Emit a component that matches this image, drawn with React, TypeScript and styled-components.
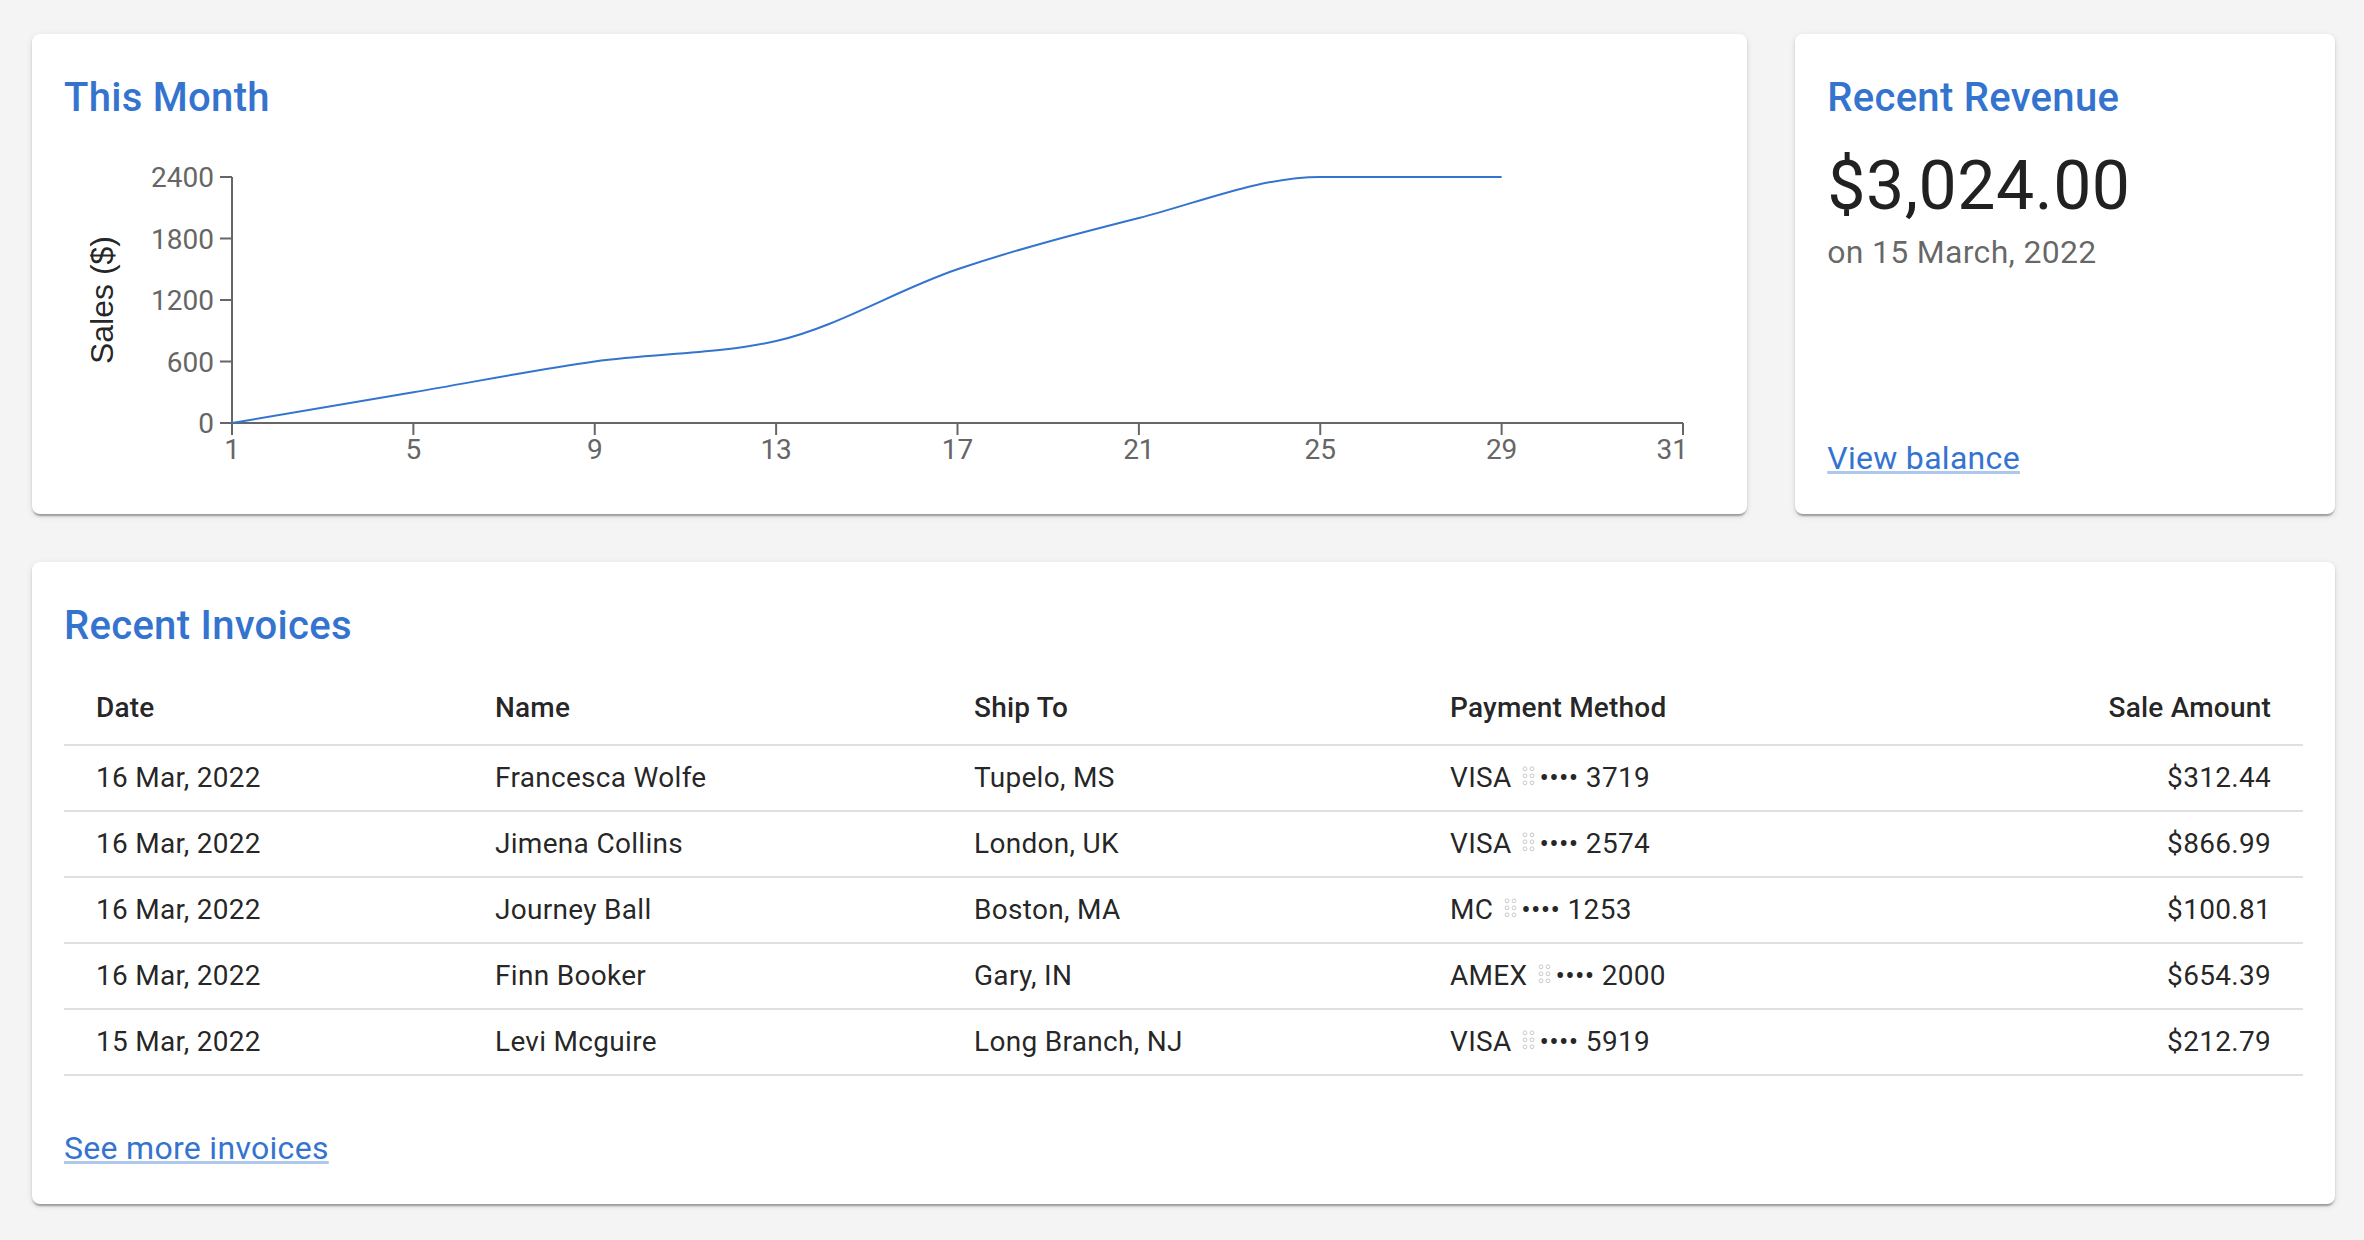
import React from "react";
import styled, { createGlobalStyle } from "styled-components";

const PRIMARY = "#3474cf";

const GlobalStyle = createGlobalStyle`
  html, body {
    margin: 0;
    padding: 0;
    background: #f4f4f4;
  }
  body {
    font-family: Roboto, "DejaVu Sans", "Liberation Sans", sans-serif;
    color: rgba(0, 0, 0, 0.87);
    -webkit-font-smoothing: antialiased;
  }
`;

const Page = styled.main`
  box-sizing: border-box;
  width: 100%;
  padding: 34px 29px 32px 32px;
  display: flex;
  flex-direction: column;
  gap: 48px;
`;

const TopRow = styled.div`
  display: grid;
  grid-template-columns: calc(75% - 12px) calc(25% - 36px);
  gap: 48px;
`;

const Paper = styled.section<{ $height?: number }>`
  box-sizing: border-box;
  background: #fff;
  border-radius: 8px;
  box-shadow: 0px 4px 2px -2px rgba(0, 0, 0, 0.2), 0px 2px 2px 0px rgba(0, 0, 0, 0.14),
    0px 2px 6px 0px rgba(0, 0, 0, 0.12);
  padding: 32px;
  display: flex;
  flex-direction: column;
  height: ${(p) => (p.$height ? `${p.$height}px` : "auto")};
`;

const Title = styled.h2`
  margin: 0 0 14px;
  font-family: Roboto, sans-serif;
  font-weight: 500;
  font-size: 40px;
  line-height: 64px;
  letter-spacing: 0.3px;
  color: ${PRIMARY};
`;

const ChartArea = styled.div`
  flex: 1;
  min-height: 0;
`;

const ChartSvg = styled.svg`
  display: block;
  overflow: visible;
`;

const Amount = styled.div`
  font-family: Roboto, sans-serif;
  font-weight: 400;
  font-size: 68px;
  line-height: 84px;
  letter-spacing: 0.5px;
  color: rgba(0, 0, 0, 0.87);
`;

const DateText = styled.p`
  margin: 0;
  flex: 1;
  font-size: 32px;
  line-height: 48px;
  letter-spacing: 0.3px;
  color: rgba(0, 0, 0, 0.6);
`;

const TextLink = styled.a<{ $mt?: number }>`
  align-self: flex-start;
  margin-top: ${(p) => p.$mt ?? 0}px;
  font-size: 32px;
  line-height: 48px;
  letter-spacing: 0.3px;
  color: ${PRIMARY};
  text-decoration: underline;
  text-decoration-color: rgba(52, 116, 207, 0.4);
  cursor: pointer;
`;

const Table = styled.table`
  width: 100%;
  border-collapse: collapse;
  table-layout: fixed;
`;

const HeadCell = styled.th<{ $align?: string }>`
  padding: 12px 32px;
  text-align: ${(p) => p.$align ?? "left"};
  font-size: 28px;
  font-weight: 500;
  line-height: 48px;
  letter-spacing: 0.2px;
  color: rgba(0, 0, 0, 0.87);
  border-bottom: 2px solid #e0e0e0;
`;

const Cell = styled.td<{ $align?: string }>`
  padding: 12px 32px;
  text-align: ${(p) => p.$align ?? "left"};
  font-size: 28px;
  font-weight: 400;
  line-height: 40px;
  letter-spacing: 0.3px;
  color: rgba(0, 0, 0, 0.87);
  border-bottom: 2px solid #e0e0e0;
  white-space: nowrap;
`;

const BrailleGlyph = styled.span`
  position: relative;
`;

const BrailleDots = styled.svg`
  position: absolute;
  left: 3px;
  top: 50%;
  transform: translateY(-60%);
  width: 14px;
  height: 22px;
  pointer-events: none;
`;

/* ---------- Chart ---------- */

const labels = ["1", "5", "9", "13", "17", "21", "25", "29", "31"];
const amounts = [0, 300, 600, 800, 1500, 2000, 2400, 2400];

const W = 1651;
const H = 338;
const PL = 168;
const PR = 1619;
const PT = 33;
const PB = 279;
const step = (PR - PL) / (labels.length - 1);
const yOf = (v: number) => PB - (v / 2400) * (PB - PT);

function monotonePath(pts: [number, number][]) {
  const n = pts.length;
  const sign = (x: number) => (x < 0 ? -1 : 1);
  const m: number[] = new Array(n).fill(0);
  for (let i = 1; i < n - 1; i++) {
    const h0 = pts[i][0] - pts[i - 1][0];
    const h1 = pts[i + 1][0] - pts[i][0];
    const s0 = (pts[i][1] - pts[i - 1][1]) / h0;
    const s1 = (pts[i + 1][1] - pts[i][1]) / h1;
    const p = (s0 * h1 + s1 * h0) / (h0 + h1);
    m[i] = (sign(s0) + sign(s1)) * Math.min(Math.abs(s0), Math.abs(s1), 0.5 * Math.abs(p)) || 0;
  }
  const hA = pts[1][0] - pts[0][0];
  m[0] = (3 * (pts[1][1] - pts[0][1]) / hA - m[1]) / 2;
  const hB = pts[n - 1][0] - pts[n - 2][0];
  m[n - 1] = (3 * (pts[n - 1][1] - pts[n - 2][1]) / hB - m[n - 2]) / 2;
  let d = `M${pts[0][0]},${pts[0][1]}`;
  for (let i = 0; i < n - 1; i++) {
    const [x0, y0] = pts[i];
    const [x1, y1] = pts[i + 1];
    const dx = (x1 - x0) / 3;
    d += `C${x0 + dx},${y0 + dx * m[i]},${x1 - dx},${y1 - dx * m[i + 1]},${x1},${y1}`;
  }
  return d;
}

const SalesChart: React.FC = () => {
  const pts: [number, number][] = amounts.map((v, i) => [PL + i * step, yOf(v)]);
  const yTicks = [0, 600, 1200, 1800, 2400];
  const last = labels.length - 1;
  return (
    <ChartSvg width={W} height={H} viewBox={`0 0 ${W} ${H}`}>
      <g stroke="#666" strokeWidth={2} fill="none">
        <line x1={PL} y1={PT} x2={PL} y2={PB} />
        <line x1={PL} y1={PB} x2={PR} y2={PB} />
        {yTicks.map((t) => (
          <line key={t} x1={PL - 12} y1={yOf(t)} x2={PL} y2={yOf(t)} />
        ))}
        {labels.map((l, i) => (
          <line key={l} x1={PL + i * step} y1={PB} x2={PL + i * step} y2={PB + 12} />
        ))}
      </g>
      <g fill="#666" fontFamily="Roboto, sans-serif" fontSize={28}>
        {yTicks.map((t) => (
          <text key={t} x={PL - 18} y={yOf(t) + 10} textAnchor="end">
            {t}
          </text>
        ))}
        {labels.map((l, i) => (
          <text
            key={l}
            x={i === last ? PR + 5 : PL + i * step}
            y={315}
            textAnchor={i === last ? "end" : "middle"}
          >
            {l}
          </text>
        ))}
      </g>
      <text
        x={49}
        y={(PT + PB) / 2}
        transform={`rotate(-90 49 ${(PT + PB) / 2})`}
        textAnchor="middle"
        fontFamily="'Liberation Sans', Arial, sans-serif"
        fontSize={32}
        fill="rgba(0,0,0,0.87)"
      >
        Sales ($)
      </text>
      <path d={monotonePath(pts)} fill="none" stroke={PRIMARY} strokeWidth={2} />
    </ChartSvg>
  );
};

/* ---------- Payment method ---------- */

const Braille: React.FC = () => (
  <BrailleGlyph>
    {"\u2800"}
    <BrailleDots viewBox="0 0 14 22" aria-hidden="true">
      {[0, 1, 2].map((r) =>
        [0, 1].map((c) => (
          <circle
            key={`${r}-${c}`}
            cx={3 + c * 7}
            cy={4 + r * 7}
            r={1.9}
            fill="none"
            stroke="#c4c4c4"
            strokeWidth={0.9}
          />
        ))
      )}
    </BrailleDots>
  </BrailleGlyph>
);

const Payment: React.FC<{ brand: string; last4: string }> = ({ brand, last4 }) => (
  <>
    {brand} <Braille />
    {"•••• "}
    {last4}
  </>
);

/* ---------- Data ---------- */

const rows = [
  { date: "16 Mar, 2022", name: "Francesca Wolfe", ship: "Tupelo, MS", brand: "VISA", last4: "3719", amount: "$312.44" },
  { date: "16 Mar, 2022", name: "Jimena Collins", ship: "London, UK", brand: "VISA", last4: "2574", amount: "$866.99" },
  { date: "16 Mar, 2022", name: "Journey Ball", ship: "Boston, MA", brand: "MC", last4: "1253", amount: "$100.81" },
  { date: "16 Mar, 2022", name: "Finn Booker", ship: "Gary, IN", brand: "AMEX", last4: "2000", amount: "$654.39" },
  { date: "15 Mar, 2022", name: "Levi Mcguire", ship: "Long Branch, NJ", brand: "VISA", last4: "5919", amount: "$212.79" },
];

export default function App() {
  return (
    <>
      <GlobalStyle />
      <Page>
        <TopRow>
          <Paper $height={480}>
            <Title>This Month</Title>
            <ChartArea>
              <SalesChart />
            </ChartArea>
          </Paper>
          <Paper $height={480}>
            <Title>Recent Revenue</Title>
            <Amount>$3,024.00</Amount>
            <DateText>on 15 March, 2022</DateText>
            <div>
              <TextLink href="#" onClick={(e) => e.preventDefault()}>
                View balance
              </TextLink>
            </div>
          </Paper>
        </TopRow>
        <Paper>
          <Title>Recent Invoices</Title>
          <Table>
            <colgroup>
              <col style={{ width: 399 }} />
              <col style={{ width: 479 }} />
              <col style={{ width: 476 }} />
              <col style={{ width: 500 }} />
              <col />
            </colgroup>
            <thead>
              <tr>
                <HeadCell>Date</HeadCell>
                <HeadCell>Name</HeadCell>
                <HeadCell>Ship To</HeadCell>
                <HeadCell>Payment Method</HeadCell>
                <HeadCell $align="right">Sale Amount</HeadCell>
              </tr>
            </thead>
            <tbody>
              {rows.map((r) => (
                <tr key={r.name}>
                  <Cell>{r.date}</Cell>
                  <Cell>{r.name}</Cell>
                  <Cell>{r.ship}</Cell>
                  <Cell>
                    <Payment brand={r.brand} last4={r.last4} />
                  </Cell>
                  <Cell $align="right">{r.amount}</Cell>
                </tr>
              ))}
            </tbody>
          </Table>
          <TextLink $mt={48} href="#" onClick={(e) => e.preventDefault()}>
            See more invoices
          </TextLink>
        </Paper>
      </Page>
    </>
  );
}
